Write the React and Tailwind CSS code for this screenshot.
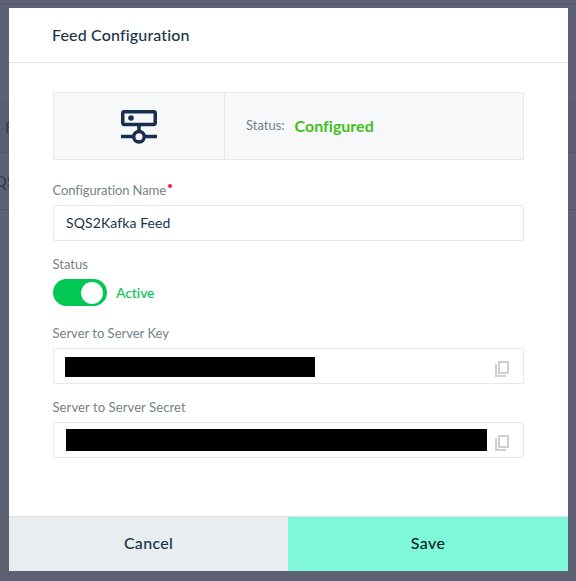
function ServerIcon() {
  return (
    <svg width="36" height="34" viewBox="0 0 36 34" fill="none" stroke="#172e4f" strokeWidth="3.5" className="mt-[2px]">
      <rect x="1.75" y="1.75" width="32.5" height="12.7" rx="1.6" />
      <path d="M18 15v6M0 26.5h12M24 26.5h12" />
      <circle cx="18" cy="26.7" r="5.3" />
      <circle cx="10" cy="8" r="2.8" fill="#172e4f" stroke="none" />
    </svg>
  );
}

function CopyIcon() {
  return (
    <svg width="14" height="16" viewBox="0 0 14 16" fill="none" stroke="#cdd0d4" strokeWidth="2" shapeRendering="crispEdges" className="block">
      <rect x="4" y="1" width="9" height="11" />
      <path d="M1 3v12h10" />
    </svg>
  );
}

function Label({ children }) {
  return <div className="-ml-[0.5px] flex h-[18px] items-center text-[13px] whitespace-nowrap text-[#74828a]">{children}</div>;
}

export default function App() {
  return (
    <div className="relative h-[581px] w-[576px] overflow-hidden bg-[#5e6073] font-['Lato','Open_Sans',sans-serif] [font-variant-ligatures:none]">
      <div className="absolute inset-0 flex flex-col text-[16px] text-[#2f3a55]">
        <div className="h-[4px] border-b border-[#55576a]" />
        <div className="h-[98px]" />
        <div className="flex h-[51px] items-center border-b border-[#55576a] bg-[#5b5d71] pl-[5px]">F</div>
        <div className="flex h-[57px] items-center border-b border-[#55576a]">
          <span className="-ml-[6px]">QS</span>
        </div>
      </div>
      <div className="absolute top-[8px] left-[9px] flex h-[563px] w-[559px] flex-col bg-white">
        <header className="flex h-[55px] items-center border-b border-[#e6e7e8] pl-[43px] text-[16px] font-medium text-[#173447]">
          <span className="tracking-[0.15px]">Feed Configuration</span>
        </header>
        <main className="flex-1 pt-[29px] pr-[44px] pl-[44px]">
          <div className="flex h-[68px] border border-[#e6e8ea] bg-[#f7f8fa]">
            <div className="flex w-[171px] items-center justify-center border-r border-[#e6e8ea]">
              <ServerIcon />
            </div>
            <div className="flex items-center pl-[21px]">
              <span className="text-[13px] text-[#74828a]">Status:</span>
              <span className="ml-[10px] text-[16px] font-bold text-[#44c01a]">Configured</span>
            </div>
          </div>
          <div className="mt-[22px]">
            <Label>
              <span className="tracking-[-0.1px]">Configuration Name</span>
              <span className="mb-[10px] ml-[2px] h-[4px] w-[4px] rounded-full bg-[#fb1749]" />
            </Label>
            <div className="mt-[5px] flex h-[36px] items-center rounded-[2px] border border-[#e6e8ea] pl-[12px] text-[14px] text-[#173447]">
              <span className="-mt-px tracking-[0.1px]">SQS2Kafka Feed</span>
            </div>
          </div>
          <div className="mt-[15px]">
            <Label>Status</Label>
            <div className="mt-[5px] flex h-[27px] items-center">
              <div className="flex h-[27px] w-[54px] items-center justify-end rounded-full bg-[#00c853] pr-[4px]">
                <div className="h-[22px] w-[22px] rounded-full bg-white" />
              </div>
              <span className="-mt-px ml-[9px] text-[14px] font-medium tracking-[-0.1px] text-[#00c853]">Active</span>
            </div>
          </div>
          <div className="mt-[19px]">
            <Label>Server to Server Key</Label>
            <div className="mt-[5px] flex h-[36px] items-start justify-between rounded-[2px] border border-[#e6e8ea] pr-[14px] pl-[11px]">
              <div className="mt-[8px] h-[20px] w-[250px] bg-black" />
              <div className="mt-[12px]"><CopyIcon /></div>
            </div>
          </div>
          <div className="mt-[15px]">
            <Label><span className="tracking-[0.1px]">Server to Server Secret</span></Label>
            <div className="mt-[5px] flex h-[36px] items-start justify-between rounded-[2px] border border-[#e6e8ea] pr-[14px] pl-[12px]">
              <div className="mt-[6px] h-[22px] w-[421px] bg-black" />
              <div className="mt-[12px]"><CopyIcon /></div>
            </div>
          </div>
        </main>
        <footer className="flex h-[55px] border-t border-[#e0e3e5] text-[16px] font-medium">
          <button className="w-[279px] bg-[#e9edf0] pb-[2px] text-[#173447]"><span className="tracking-[0.3px]">Cancel</span></button>
          <button className="flex-1 bg-[#7ff8da] pb-[2px] text-[#0c2227]"><span className="tracking-[0.4px]">Save</span></button>
        </footer>
      </div>
    </div>
  );
}
